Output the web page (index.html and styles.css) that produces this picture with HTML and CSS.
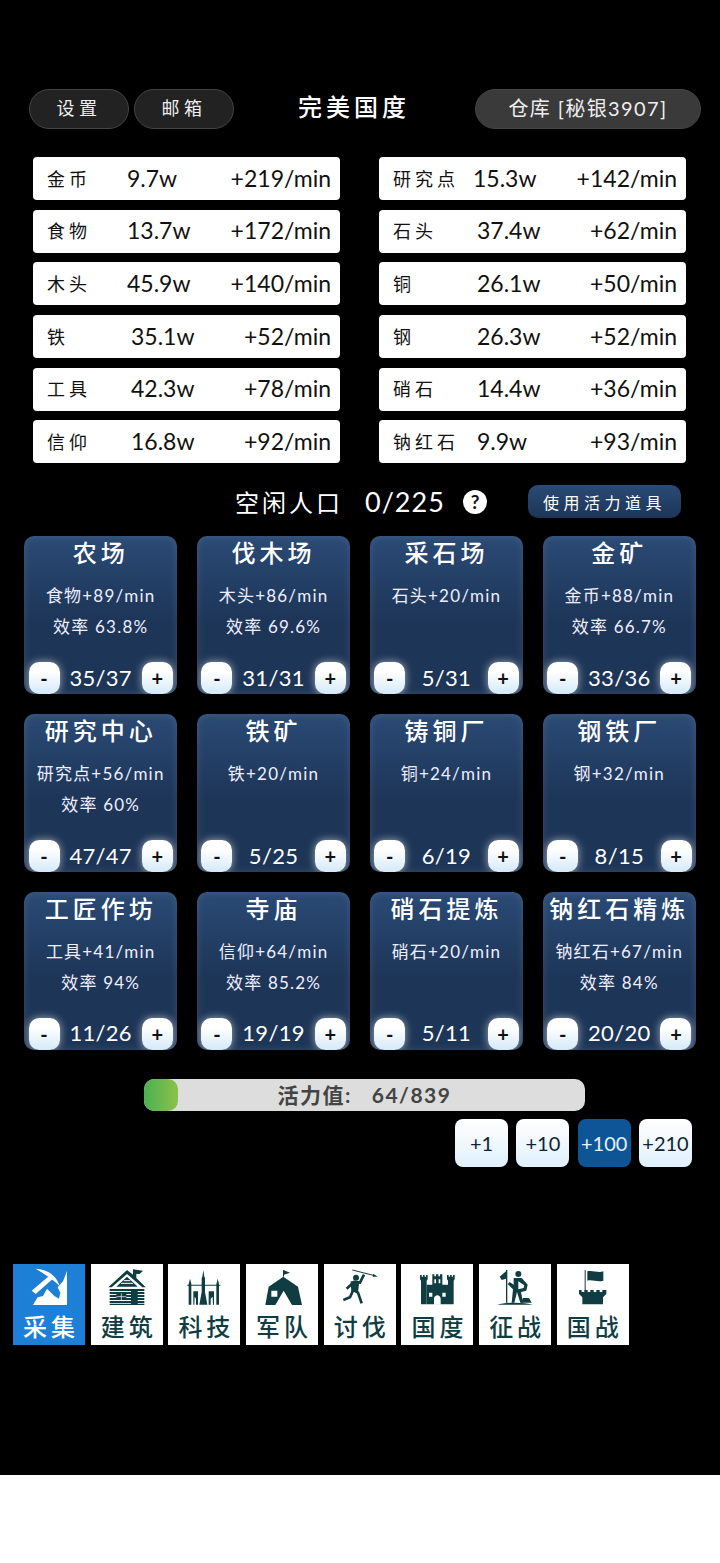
FILE: index.html
```html
<!DOCTYPE html>
<html lang="zh-CN">

<head>
    <meta charset="UTF-8">
    <meta name="viewport" content="width=device-width, initial-scale=1.0">
    <title>完美国度</title>
    <link rel="stylesheet" href="styles.css">
</head>

<body>
    <div class="app">
        <header class="top-bar">
            <div class="top-left">
                <button class="pill-btn">设置</button>
                <button class="pill-btn">邮箱</button>
            </div>
            <span class="country-name">完美国度</span>
            <button class="pill-btn store-btn">仓库 [秘银3907]</button>
        </header>

        <section class="res-grid">
            <div class="res-row"><span>金币</span><span>9.7w</span><span>+219/min</span></div>
            <div class="res-row"><span>研究点</span><span>15.3w</span><span>+142/min</span></div>
            <div class="res-row"><span>食物</span><span>13.7w</span><span>+172/min</span></div>
            <div class="res-row nudge"><span>石头</span><span>37.4w</span><span>+62/min</span></div>
            <div class="res-row"><span>木头</span><span>45.9w</span><span>+140/min</span></div>
            <div class="res-row nudge"><span>铜</span><span>26.1w</span><span>+50/min</span></div>
            <div class="res-row nudge"><span>铁</span><span>35.1w</span><span>+52/min</span></div>
            <div class="res-row nudge"><span>钢</span><span>26.3w</span><span>+52/min</span></div>
            <div class="res-row nudge"><span>工具</span><span>42.3w</span><span>+78/min</span></div>
            <div class="res-row nudge"><span>硝石</span><span>14.4w</span><span>+36/min</span></div>
            <div class="res-row nudge"><span>信仰</span><span>16.8w</span><span>+92/min</span></div>
            <div class="res-row nudge"><span>钠红石</span><span>9.9w</span><span>+93/min</span></div>
        </section>

        <section class="idle-row">
            <span class="idle-label">空闲人口</span>
            <span class="idle-count">0/225</span>
            <span class="help-icon">?</span>
            <button class="item-btn">使用活力道具</button>
        </section>

        <section class="card-grid">
            <div class="card">
                <h3>农场</h3>
                <p>食物+89/min</p>
                <p>效率 63.8%</p>
                <div class="card-controls"><button>-</button><span>35/37</span><button>+</button></div>
            </div>
            <div class="card">
                <h3>伐木场</h3>
                <p>木头+86/min</p>
                <p>效率 69.6%</p>
                <div class="card-controls"><button>-</button><span>31/31</span><button>+</button></div>
            </div>
            <div class="card">
                <h3>采石场</h3>
                <p>石头+20/min</p>
                <div class="card-controls"><button>-</button><span>5/31</span><button>+</button></div>
            </div>
            <div class="card">
                <h3>金矿</h3>
                <p>金币+88/min</p>
                <p>效率 66.7%</p>
                <div class="card-controls"><button>-</button><span>33/36</span><button>+</button></div>
            </div>
            <div class="card">
                <h3>研究中心</h3>
                <p>研究点+56/min</p>
                <p>效率 60%</p>
                <div class="card-controls"><button>-</button><span>47/47</span><button>+</button></div>
            </div>
            <div class="card">
                <h3>铁矿</h3>
                <p>铁+20/min</p>
                <div class="card-controls"><button>-</button><span>5/25</span><button>+</button></div>
            </div>
            <div class="card">
                <h3>铸铜厂</h3>
                <p>铜+24/min</p>
                <div class="card-controls"><button>-</button><span>6/19</span><button>+</button></div>
            </div>
            <div class="card">
                <h3>钢铁厂</h3>
                <p>钢+32/min</p>
                <div class="card-controls"><button>-</button><span>8/15</span><button>+</button></div>
            </div>
            <div class="card">
                <h3>工匠作坊</h3>
                <p>工具+41/min</p>
                <p>效率 94%</p>
                <div class="card-controls"><button>-</button><span>11/26</span><button>+</button></div>
            </div>
            <div class="card">
                <h3>寺庙</h3>
                <p>信仰+64/min</p>
                <p>效率 85.2%</p>
                <div class="card-controls"><button>-</button><span>19/19</span><button>+</button></div>
            </div>
            <div class="card">
                <h3>硝石提炼</h3>
                <p>硝石+20/min</p>
                <div class="card-controls"><button>-</button><span>5/11</span><button>+</button></div>
            </div>
            <div class="card">
                <h3>钠红石精炼</h3>
                <p>钠红石+67/min</p>
                <p>效率 84%</p>
                <div class="card-controls"><button>-</button><span>20/20</span><button>+</button></div>
            </div>
        </section>

        <div class="energy-bar">
            <div class="energy-fill"></div>
            <span class="energy-text">活力值: &nbsp;&nbsp;64/839</span>
        </div>
        <div class="energy-btns">
            <button>+1</button>
            <button>+10</button>
            <button class="active">+100</button>
            <button>+210</button>
        </div>

        <nav class="tabs">
            <a href="#" class="tab active">
                <svg viewBox="0 0 216 132">
                    <path d="M162 21V123H60L74 100 90 96 102 74 112 84 124 96 138 104 142 86 134 70 150 52Z" />
                    <path d="M68 14C100 16 130 32 140 66 120 46 98 32 68 14Z" />
                    <path d="M108 36 118 46 68 90 56 80Z" />
                </svg>
                <span>采集</span>
            </a>
            <a href="#" class="tab">
                <svg viewBox="0 0 216 132">
                    <path d="M108 18 126 32V16L156 20 146 30H136V42L164 70H154L108 30 62 70H52Z" />
                    <path d="M108 38 140 68H76Z" />
                    <path class="gap" d="M90 58H126M98 50H118" />
                    <path class="logs" d="M56 78H160M56 87H160M56 96H160M56 105H160M56 114H160" />
                    <path d="M120 80H140V122H120ZM76 88H106V108H76Z" />
                    <path class="gap-fine" d="M91 88V108M76 98H106" />
                    <path d="M56 119H160V123H56Z" />
                </svg>
                <span>建筑</span>
            </a>
            <a href="#" class="tab">
                <svg viewBox="0 0 216 132">
                    <path d="M106 18 109 38 111 42V84L118 122H94L101 84V42L103 38Z" />
                    <path d="M66 44 69 56 70 60V122H62V60L63 56ZM149 44 152 56 153 60V122H145V60L146 56Z" />
                    <path d="M76 82H90V122H84V104L80 98 79 122H76ZM122 82H138V122H135L134 98 128 104V122H122Z" />
                    <path d="M58 62H157V65H58Z" />
                </svg>
                <span>科技</span>
            </a>
            <a href="#" class="tab">
                <svg viewBox="0 0 216 132">
                    <path d="M111 18H114V38H111Z" />
                    <path d="M114 19 132 26 114 32Z" />
                    <path fill-rule="evenodd" d="M112 38 156 68 168 123H138L113 80 88 123H58L68 68ZM76 80V98H94V80Z" />
                </svg>
                <span>军队</span>
            </a>
            <a href="#" class="tab">
                <svg viewBox="0 0 216 132">
                    <path class="spear" d="M85 18 148 34" />
                    <path d="M148 29 161 38 146 38Z" />
                    <circle cx="96" cy="41" r="9" />
                    <path class="limb" d="M120 32 108 56 90 54 68 74M92 54 88 78 102 86 113 118M88 78 78 100 58 108" />
                    <path d="M80 52H106L102 84H82Z" />
                </svg>
                <span>讨伐</span>
            </a>
            <a href="#" class="tab">
                <svg viewBox="0 0 216 132">
                    <path d="M57 33H62V38H66V33H71V38H75V33H80V46L77 50V121H60V50L57 46Z" />
                    <path d="M138 33H143V38H147V33H152V38H156V33H161V46L158 50V121H141V50L138 46Z" />
                    <path d="M94 31H100V37H105V31H112V37H117V31H124V62H141V121H77V62H94Z" />
                    <path class="white" d="M99 122V104C99 90 119 90 119 104V122ZM84 86H94V98H84ZM124 86H134V98H124ZM100 46H105V58H100ZM113 46H118V58H113Z" />
                </svg>
                <span>国度</span>
            </a>
            <a href="#" class="tab">
                <svg viewBox="0 0 216 132">
                    <path d="M55 122C80 114 136 114 162 122Z" />
                    <path d="M81 18H85V116H81Z" />
                    <path d="M81 22 62 38 68 48 81 44Z" />
                    <circle cx="118" cy="30" r="9" />
                    <path fill-rule="evenodd" d="M104 42H128L146 62 142 80 126 84 132 116H124L114 84 106 116H98L102 76 86 60 92 54 104 62ZM118 52V76L134 72 136 64Z" />
                    <path d="M132 102H150L158 116H126Z" />
                </svg>
                <span>征战</span>
            </a>
            <a href="#" class="tab">
                <svg viewBox="0 0 216 132">
                    <path d="M83 18H86V80H83Z" />
                    <path d="M91 22C106 18 124 28 139 22V50C124 56 106 46 91 50Z" />
                    <path d="M66 78H74V84H82V78H92V84H100V78H110V84H118V78H128V84H136V78H148V90L138 100V121H76V100L66 90Z" />
                </svg>
                <span>国战</span>
            </a>
        </nav>
    </div>
</body>

</html>
```

FILE: styles.css
```css
body {
    margin: 0;
    background: #fff;
    font-family: Lato, 'Noto Sans CJK SC', sans-serif;
}

button {
    font-family: inherit;
    cursor: pointer;
}

.app {
    height: 1475px;
    box-sizing: border-box;
    padding-top: 89px;
    background: #000;
    color: #fff;
    overflow: hidden;
}

/* Top bar */
.top-bar {
    display: flex;
    align-items: center;
    height: 40px;
    padding: 0 19px 0 29px;
}

.top-left {
    display: flex;
    gap: 5px;
}

.pill-btn {
    width: 100px;
    height: 40px;
    padding: 0 0 4px;
    background: #222;
    color: #eee;
    border: 1px solid #444;
    border-radius: 20px;
    font-size: 18px;
    letter-spacing: 4.5px;
}

.store-btn {
    width: 226px;
    margin-left: auto;
    background: #3a3a3a;
    font-size: 20px;
    letter-spacing: 1.4px;
}

.country-name {
    margin: 0 0 7px 64px;
    font-size: 24px;
    letter-spacing: 4px;
    font-weight: 500;
}

/* Resources */
.res-grid {
    display: grid;
    grid-template-columns: 307px 307px;
    column-gap: 39px;
    row-gap: 9.7px;
    margin: 28px 0 0 33px;
}

.res-row {
    display: grid;
    grid-template-columns: 80px auto 1fr;
    align-items: center;
    height: 43px;
    padding: 0 9px 2px 14px;
    background: #fff;
    color: #111;
    border-radius: 4px;
    font-size: 23px;
    box-sizing: border-box;
}

.res-row span:first-child {
    font-size: 18px;
    letter-spacing: 4px;
    white-space: nowrap;
}

.res-row span:last-child {
    text-align: right;
}

.res-row.nudge span:nth-child(2) {
    margin-left: 4px;
}

/* Idle workers */
.idle-row {
    display: flex;
    align-items: center;
    height: 33px;
    margin: 22px 0 0 235px;
}

.idle-label {
    width: 130px;
    font-size: 24px;
    letter-spacing: 3px;
}

.idle-count {
    width: 98px;
    font-size: 27px;
    letter-spacing: 1px;
}

.help-icon {
    width: 24px;
    height: 24px;
    background: #fff;
    color: #111;
    border-radius: 50%;
    font-size: 19px;
    font-weight: bold;
    line-height: 24px;
    text-align: center;
}

.item-btn {
    width: 153px;
    height: 33px;
    margin-left: 41px;
    padding: 0;
    background: linear-gradient(180deg, #2a4a75, #1d3557);
    color: #fff;
    border: none;
    border-radius: 10px;
    font-size: 16px;
    letter-spacing: 4.5px;
}

/* Building cards */
.card-grid {
    display: grid;
    grid-template-columns: repeat(4, 1fr);
    column-gap: 19.5px;
    row-gap: 19.7px;
    margin: 18px 24px 0;
}

.card {
    display: flex;
    flex-direction: column;
    align-items: center;
    height: 158px;
    background: linear-gradient(180deg, #2a4a75 0%, #1d3557 55%, #1d3557 100%);
    border-radius: 10px;
    box-shadow: inset 0 0 8px rgba(255, 255, 255, 0.12);
    overflow: hidden;
}

.card h3 {
    margin: 0 0 10px;
    height: 34px;
    font-size: 24px;
    font-weight: 500;
    line-height: 34px;
    letter-spacing: 4px;
    white-space: nowrap;
}

.card p {
    margin: 0;
    height: 31px;
    color: #eef;
    font-size: 17px;
    line-height: 31px;
    letter-spacing: 1.2px;
    white-space: nowrap;
}

.card-controls {
    display: flex;
    align-items: center;
    justify-content: space-between;
    width: 100%;
    margin-top: auto;
    padding: 0 4.5px;
    box-sizing: border-box;
    font-size: 22px;
    letter-spacing: 0.3px;
}

.card-controls span {
    margin-bottom: 2px;
}

.card-controls button {
    width: 31px;
    height: 32px;
    padding: 0;
    background: linear-gradient(180deg, #fff 30%, #d4e9f9 100%);
    color: #111;
    border: none;
    border-radius: 10px;
    box-shadow: 0 0 8px rgba(255, 255, 255, 0.6);
    font-size: 20px;
    font-weight: bold;
}

/* Energy */
.energy-bar {
    position: relative;
    display: flex;
    align-items: center;
    justify-content: center;
    width: 441px;
    height: 32px;
    margin: 29.6px 0 0 144px;
    padding-bottom: 3px;
    box-sizing: border-box;
    background: #ddd;
    border-radius: 10px;
    overflow: hidden;
}

.energy-fill {
    position: absolute;
    left: 0;
    top: 0;
    bottom: 0;
    width: 34px;
    background: linear-gradient(90deg, #4caf50, #8bc34a);
    border-radius: 10px;
}

.energy-text {
    position: relative;
    color: #444;
    font-size: 21px;
    font-weight: bold;
    letter-spacing: 1.5px;
}

.energy-btns {
    display: flex;
    justify-content: flex-end;
    gap: 8.33px;
    margin-top: 8px;
    padding-right: 28px;
}

.energy-btns button {
    width: 53px;
    height: 48px;
    padding: 0;
    background: linear-gradient(180deg, #fff, #e0f0fd);
    color: #123;
    border: none;
    border-radius: 8px;
    font-size: 20px;
}

.energy-btns .active {
    background: #0d5596;
    color: #e3f2fd;
}

/* Bottom tabs */
.tabs {
    display: flex;
    gap: 5.7px;
    margin-top: 97px;
    padding-left: 13px;
}

.tab {
    display: flex;
    flex-direction: column;
    align-items: center;
    width: 72px;
    height: 81px;
    background: #fff;
    color: #0f3d42;
    text-decoration: none;
}

.tab svg {
    width: 72px;
    height: 44px;
    fill: currentColor;
}

.tab span {
    margin-top: 5px;
    font-size: 24px;
    font-weight: 500;
    line-height: 28px;
    letter-spacing: 4px;
    margin-right: -4px;
}

.tab.active {
    background: #1e7fd6;
    color: #fff;
}

.tab .white {
    fill: #fff;
}

.tab .gap {
    fill: none;
    stroke: #fff;
    stroke-width: 3;
}

.tab .gap-fine {
    fill: none;
    stroke: #fff;
    stroke-width: 2;
}

.tab .logs {
    fill: none;
    stroke: currentColor;
    stroke-width: 6;
}

.tab .spear {
    fill: none;
    stroke: currentColor;
    stroke-width: 3;
}

.tab .limb {
    fill: none;
    stroke: currentColor;
    stroke-width: 8;
}
```
